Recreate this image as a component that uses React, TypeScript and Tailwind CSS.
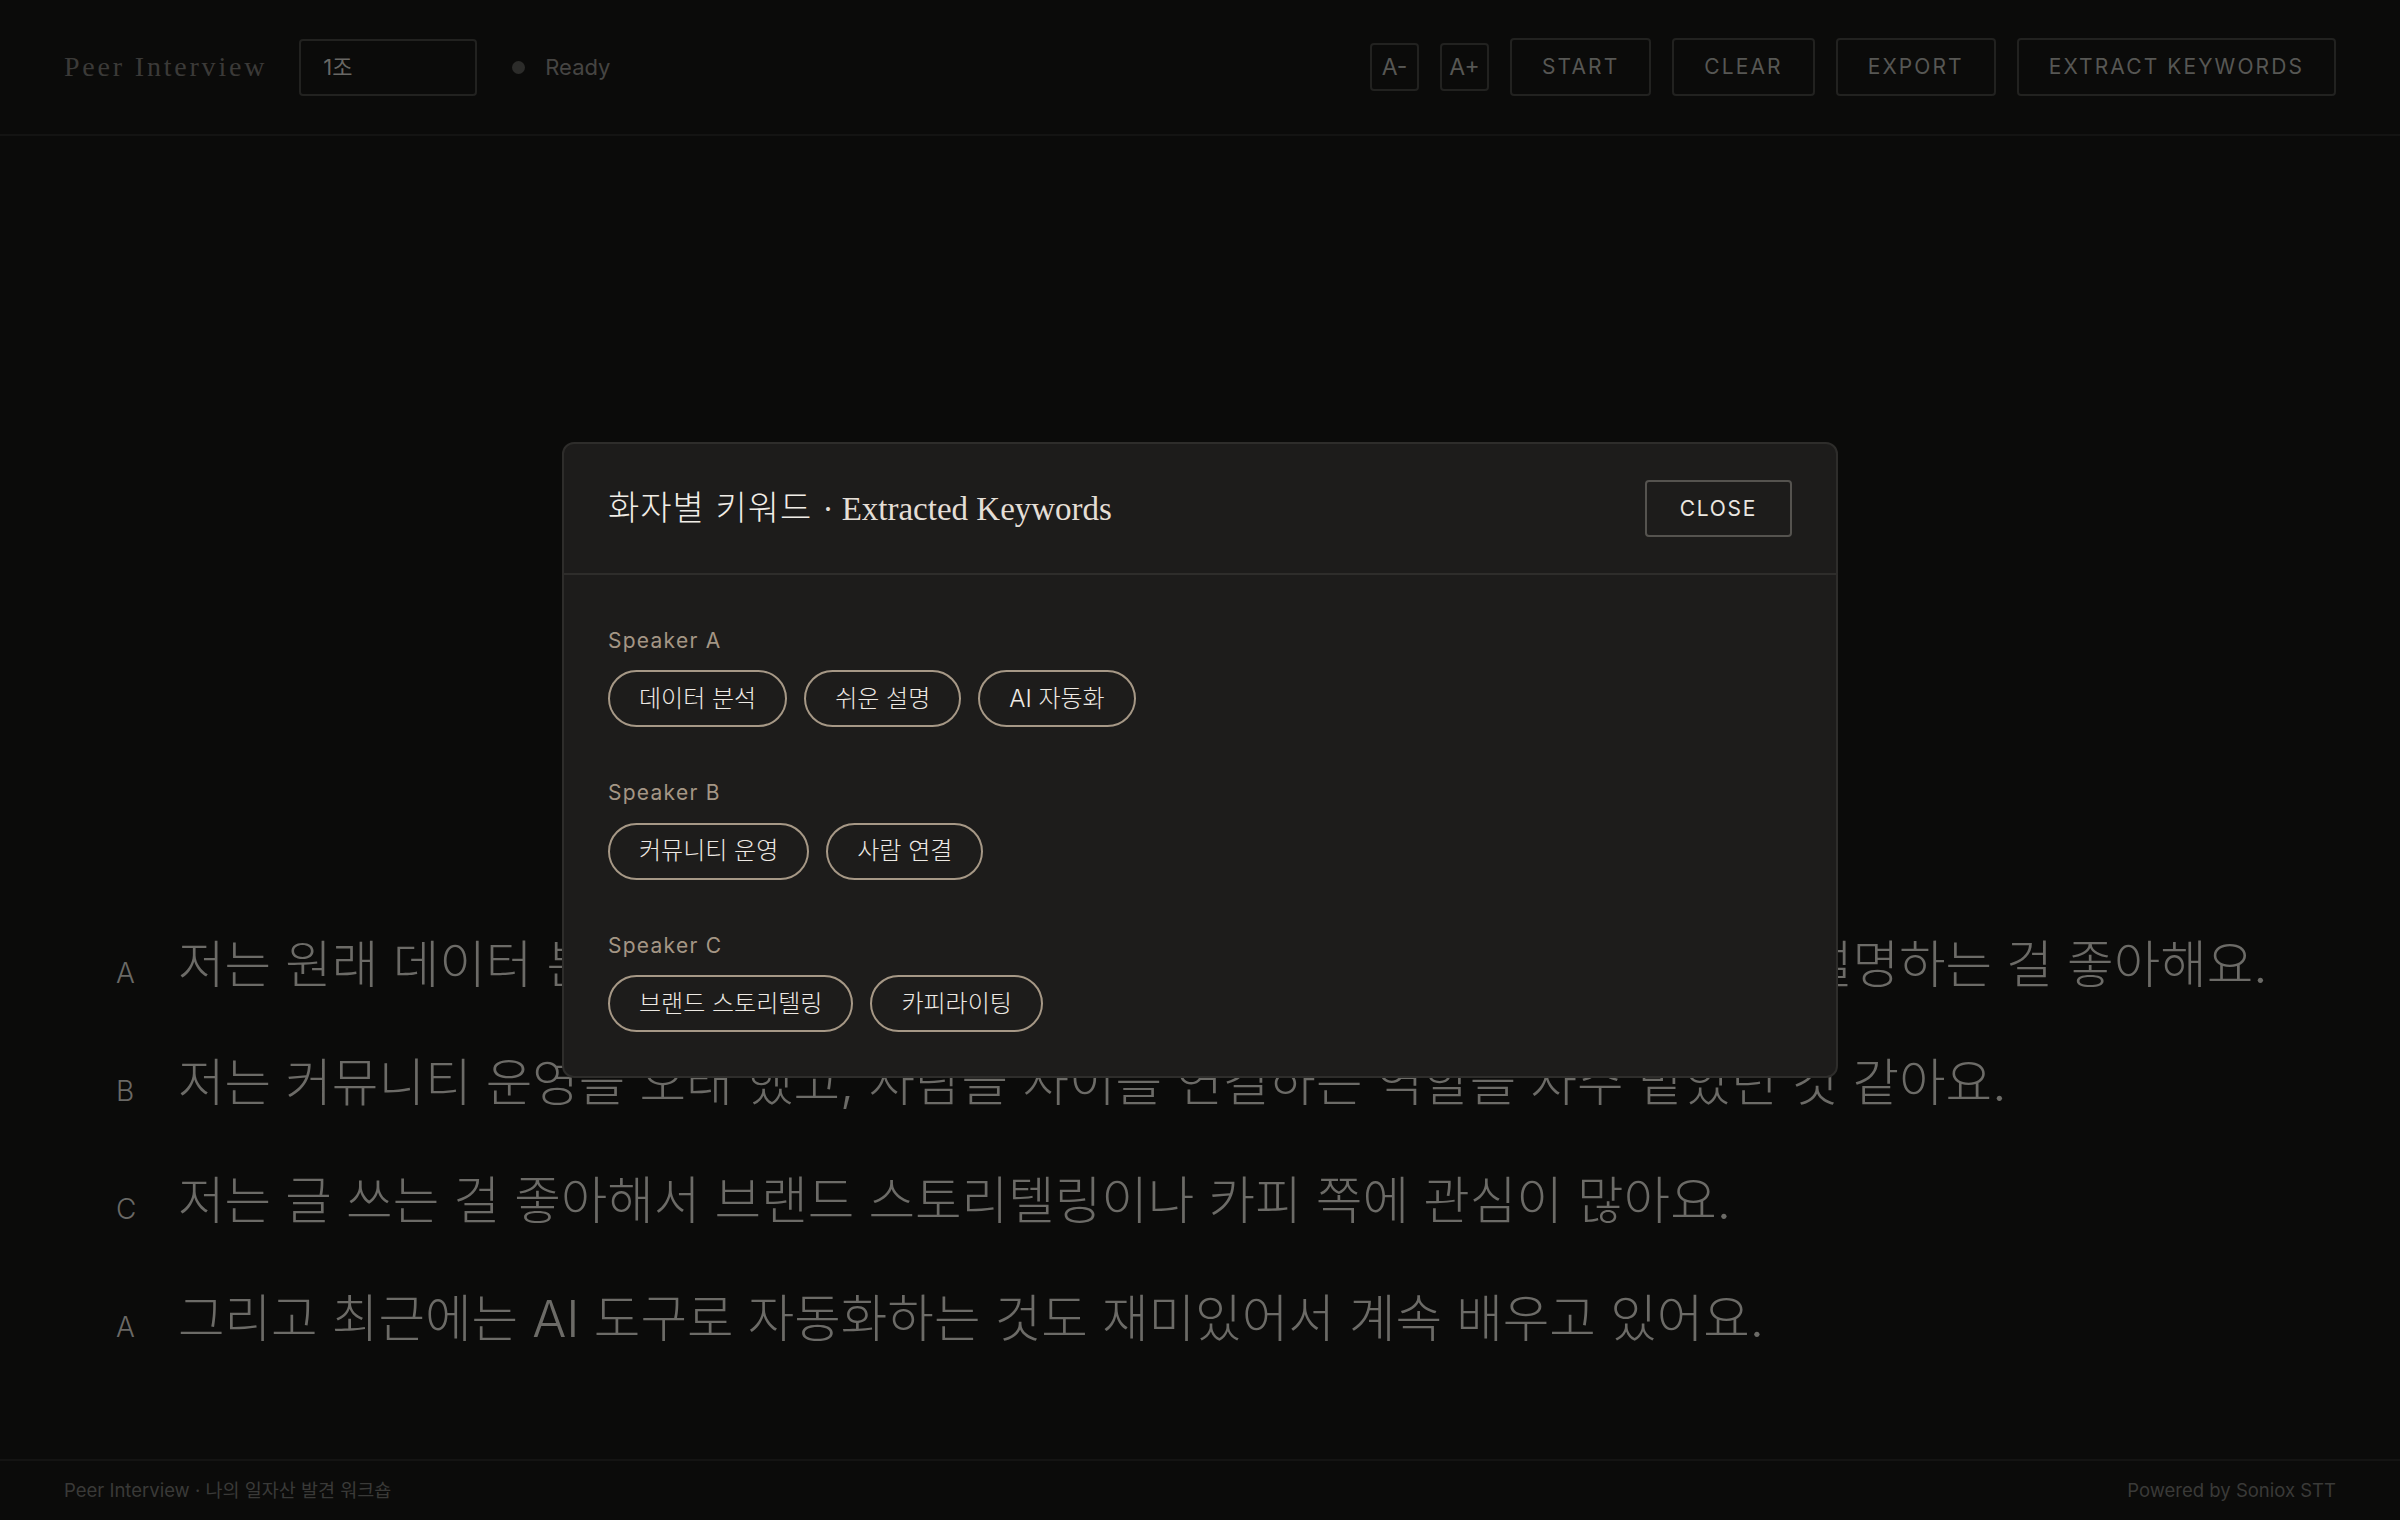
import React from "react"

const sans = "font-['Inter','Noto_Sans_CJK_KR',sans-serif]"
const serif = "font-['Liberation_Serif','Noto_Sans_CJK_KR',serif]"

const lines = [
  { who: "A", text: "저는 원래 데이터 분석 일을 했는데 복잡한 숫자를 누구나 이해할 수 있게 쉽게 설명하는 걸 좋아해요." },
  { who: "B", text: "저는 커뮤니티 운영을 오래 했고, 사람들 사이를 연결하는 역할을 자주 맡았던 것 같아요." },
  { who: "C", text: "저는 글 쓰는 걸 좋아해서 브랜드 스토리텔링이나 카피 쪽에 관심이 많아요." },
  { who: "A", text: "그리고 최근에는 AI 도구로 자동화하는 것도 재미있어서 계속 배우고 있어요." },
]

const keywords = [
  { speaker: "Speaker A", items: ["데이터 분석", "쉬운 설명", "AI 자동화"] },
  { speaker: "Speaker B", items: ["커뮤니티 운영", "사람 연결"] },
  { speaker: "Speaker C", items: ["브랜드 스토리텔링", "카피라이팅"] },
]

function HeaderButton({ label, small }: { label: string; small?: boolean }) {
  return (
    <button
      className={
        small
          ? "h-[48px] w-[49px] rounded-[4px] border-2 border-[#222220] text-[23px] text-[#575754]"
          : "h-[58px] rounded-[4px] border-2 border-[#222220] px-[30px] text-[21px] tracking-[0.1em] text-[#575754]"
      }
    >
      {label}
    </button>
  )
}

function KeywordModal() {
  return (
    <div className="fixed inset-0 flex items-center justify-center">
      <div className="w-[1276px] rounded-[12px] border-2 border-[#2e2d2b] bg-[#1d1c1b]">
        <div className="flex h-[131px] items-center justify-between border-b-2 border-[#2e2d2b] px-[44px]">
          <h2 className="flex items-baseline text-[#f1ede7]">
            <span className={`${sans} text-[34px] font-light tracking-[0.03em]`}>화자별 키워드</span>
            <span className={`${serif} ml-[10px] text-[33px] text-[#e4ded6]`}>· Extracted Keywords</span>
          </h2>
          <button className={`${sans} h-[57px] rounded-[4px] border-2 border-[#55534f] px-[33px] text-[21px] tracking-[0.08em] text-[#ebe7e1]`}>
            CLOSE
          </button>
        </div>
        <div className="flex flex-col gap-[50px] px-[44px] pt-[50px] pb-[44px]">
          {keywords.map((k) => (
            <div key={k.speaker} className="flex flex-col gap-[14px]">
              <div className={`${sans} text-[21px] tracking-[0.06em] text-[#a49685]`}>{k.speaker}</div>
              <div className="flex gap-[17px]">
                {k.items.map((w) => (
                  <span
                    key={w}
                    className={`${sans} flex h-[57px] items-center rounded-full border-2 border-[#a69886] px-[29px] text-[24px] font-light text-[#eeeae4]`}
                  >
                    {w}
                  </span>
                ))}
              </div>
            </div>
          ))}
        </div>
      </div>
    </div>
  )
}

export default function App() {
  return (
    <div className={`${sans} relative flex h-[1520px] flex-col bg-[#0b0b0a]`}>
      <header className="flex h-[136px] shrink-0 items-center justify-between border-b-2 border-[#141413] px-[64px]">
        <div className="flex items-center">
          <span className={`${serif} text-[28px] tracking-[0.1em] text-[#3b3a38]`}>Peer Interview</span>
          <div className="ml-[32px] flex h-[57px] w-[178px] items-center rounded-[4px] border-2 border-[#222220] px-[22px] text-[22px] text-[#686764]">
            1조
          </div>
          <span className="ml-[35px] h-[13px] w-[13px] rounded-full bg-[#2c2c2a]" />
          <span className="ml-[20px] text-[22px] text-[#464543]">Ready</span>
        </div>
        <div className="flex items-center gap-[21px]">
          <HeaderButton label="A-" small />
          <HeaderButton label="A+" small />
          <HeaderButton label="START" />
          <HeaderButton label="CLEAR" />
          <HeaderButton label="EXPORT" />
          <HeaderButton label="EXTRACT KEYWORDS" />
        </div>
      </header>

      <main className="flex flex-1 flex-col justify-end gap-[46px] pb-[104px] pl-[116px] pr-[64px]">
        {lines.map((l, i) => (
          <div key={i} className="flex items-baseline">
            <span className="w-[62px] shrink-0 text-[28px] font-light text-[#6a6966]">{l.who}</span>
            <p className="whitespace-nowrap text-[50.6px] leading-[72px] font-light text-[#6c6b67]">{l.text}</p>
          </div>
        ))}
      </main>

      <footer className="flex h-[61px] shrink-0 items-center justify-between border-t-2 border-[#141413] px-[64px] text-[18.5px] text-[#3a3a38]">
        <span>Peer Interview · 나의 일자산 발견 워크숍</span>
        <span>Powered by Soniox STT</span>
      </footer>

      <KeywordModal />
    </div>
  )
}
